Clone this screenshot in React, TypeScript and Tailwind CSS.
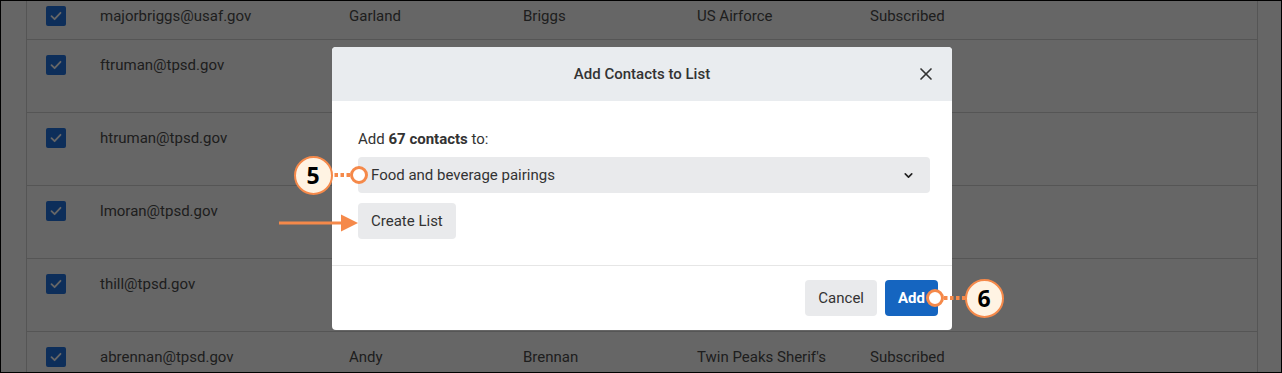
import { X, ChevronDown } from 'lucide-react'

interface Contact {
  email: string
  first: string
  last: string
  company: string
  status: string
  tall?: boolean
}

const CONTACTS: Contact[] = [
  { email: 'majorbriggs@usaf.gov', first: 'Garland', last: 'Briggs', company: 'US Airforce', status: 'Subscribed' },
  { email: 'ftruman@tpsd.gov', first: 'Frank', last: 'Truman', company: "Twin Peaks Sherif's Department", status: 'Subscribed', tall: true },
  { email: 'htruman@tpsd.gov', first: 'Harry', last: 'Truman', company: "Twin Peaks Sherif's Department", status: 'Subscribed', tall: true },
  { email: 'lmoran@tpsd.gov', first: 'Lucy', last: 'Moran', company: "Twin Peaks Sherif's Department", status: 'Subscribed', tall: true },
  { email: 'thill@tpsd.gov', first: 'Tommy', last: 'Hill', company: "Twin Peaks Sherif's Department", status: 'Subscribed', tall: true },
  { email: 'abrennan@tpsd.gov', first: 'Andy', last: 'Brennan', company: "Twin Peaks Sherif's", status: 'Subscribed', tall: true },
]

function Checkbox() {
  return (
    <div className="w-5 h-5 rounded-[2px] bg-[#2173e0] flex items-center justify-center">
      <svg width="12" height="10" viewBox="0 0 12 10" fill="none">
        <path d="M1.5 5.2 L4.6 8.2 L10.5 1.8" stroke="#ffffff" strokeWidth="1.8" strokeLinecap="round" strokeLinejoin="round" />
      </svg>
    </div>
  )
}

function StepBadge({ n, cx, cy, ringX }: { n: number; cx: number; cy: number; ringX: number }) {
  const left = Math.min(cx, ringX) - 20
  const width = Math.abs(cx - ringX) + 40
  const circleX = cx - left
  const rx = ringX - left
  const dotFrom = rx < circleX ? rx + 9 : rx - 9
  const dotTo = rx < circleX ? circleX - 19 : circleX + 19
  return (
    <div className="absolute" style={{ left, top: cy - 20, width, height: 40 }}>
      <svg width={width} height="40" className="absolute inset-0">
        <line x1={dotFrom} y1="20" x2={dotTo} y2="20" stroke="#f5894a" strokeWidth="4" strokeDasharray="3.5 2.5" />
        <circle cx={rx} cy="20" r="7.5" fill="#ffffff" stroke="#f5894a" strokeWidth="3" />
      </svg>
      <div
        className="absolute w-[39px] h-[39px] rounded-full border-[2.5px] border-[#f5894a] bg-[#fff3e3] flex items-center justify-center text-[23px] font-bold text-black font-['Noto_Sans',sans-serif] leading-none"
        style={{ left: circleX - 19.5, top: 0.5 }}
      >
        {n}
      </div>
    </div>
  )
}

export default function App() {
  return (
    <div className="relative w-[1282px] h-[373px] overflow-hidden bg-white border border-black font-['Roboto',sans-serif]">
      {/* Contacts table behind the modal */}
      <div className="ml-[25px] w-[1232px] -mt-[10px] border-x border-[#d5d5d5] text-[15px] text-[#4d4d4d]">
        {CONTACTS.map((c) => (
          <div
            key={c.email}
            className={`grid grid-cols-[73px_249px_174px_174px_173px_1fr] border-b border-[#d5d5d5] pt-[15px] ${c.tall ? 'h-[73px]' : 'h-[49px]'}`}
          >
            <div className="pl-[19px]">
              <Checkbox />
            </div>
            <div className="leading-5">{c.email}</div>
            <div className="leading-5">{c.first}</div>
            <div className="leading-5">{c.last}</div>
            <div className="leading-5 pr-6">{c.company}</div>
            <div className="leading-5">{c.status}</div>
          </div>
        ))}
      </div>

      {/* Backdrop */}
      <div className="absolute inset-0 bg-black/60" />

      {/* Modal */}
      <div className="absolute left-[331px] top-[46px] w-[620px] bg-white rounded-[4px] overflow-hidden text-[15px] text-[#333]">
        <div className="relative h-[54px] bg-[#e9ecef] flex items-center justify-center">
          <h2 className="font-medium text-[15px] text-[#333]">Add Contacts to List</h2>
          <X className="absolute right-[16px] top-[17px] text-[#333]" size={20} strokeWidth={2} />
        </div>
        <div className="pl-[26px] pr-[22px] pt-[28px] pb-[26px]">
          <p className="leading-5">
            Add <span className="font-bold">67 contacts</span> to:
          </p>
          <div className="mt-2 h-[36px] rounded-[4px] bg-[#e9eaec] flex items-center justify-between pl-[13px] pr-[15px]">
            <span>Food and beverage pairings</span>
            <ChevronDown size={13} strokeWidth={3} className="text-[#222]" />
          </div>
          <button className="mt-[10px] h-[36px] px-[13px] rounded-[4px] bg-[#e9eaec] text-[#333]">Create List</button>
        </div>
        <div className="border-t border-[#e6e6e6] flex justify-end gap-2 px-[14px] py-[14px]">
          <button className="h-[36px] px-[13px] rounded-[4px] bg-[#e9eaec] text-[#333]">Cancel</button>
          <button className="h-[36px] px-[13px] rounded-[4px] bg-[#1565c0] text-white font-bold">Add</button>
        </div>
      </div>

      {/* Annotations */}
      <StepBadge n={5} cx={312} cy={174} ringX={358} />
      <StepBadge n={6} cx={983} cy={297} ringX={934} />
      <svg className="absolute left-[278px] top-[212px]" width="80" height="20" viewBox="0 0 80 20">
        <line x1="0" y1="10" x2="64" y2="10" stroke="#f5894a" strokeWidth="3" />
        <polygon points="62,1.5 79,10 62,18.5" fill="#f5894a" />
      </svg>
    </div>
  )
}
